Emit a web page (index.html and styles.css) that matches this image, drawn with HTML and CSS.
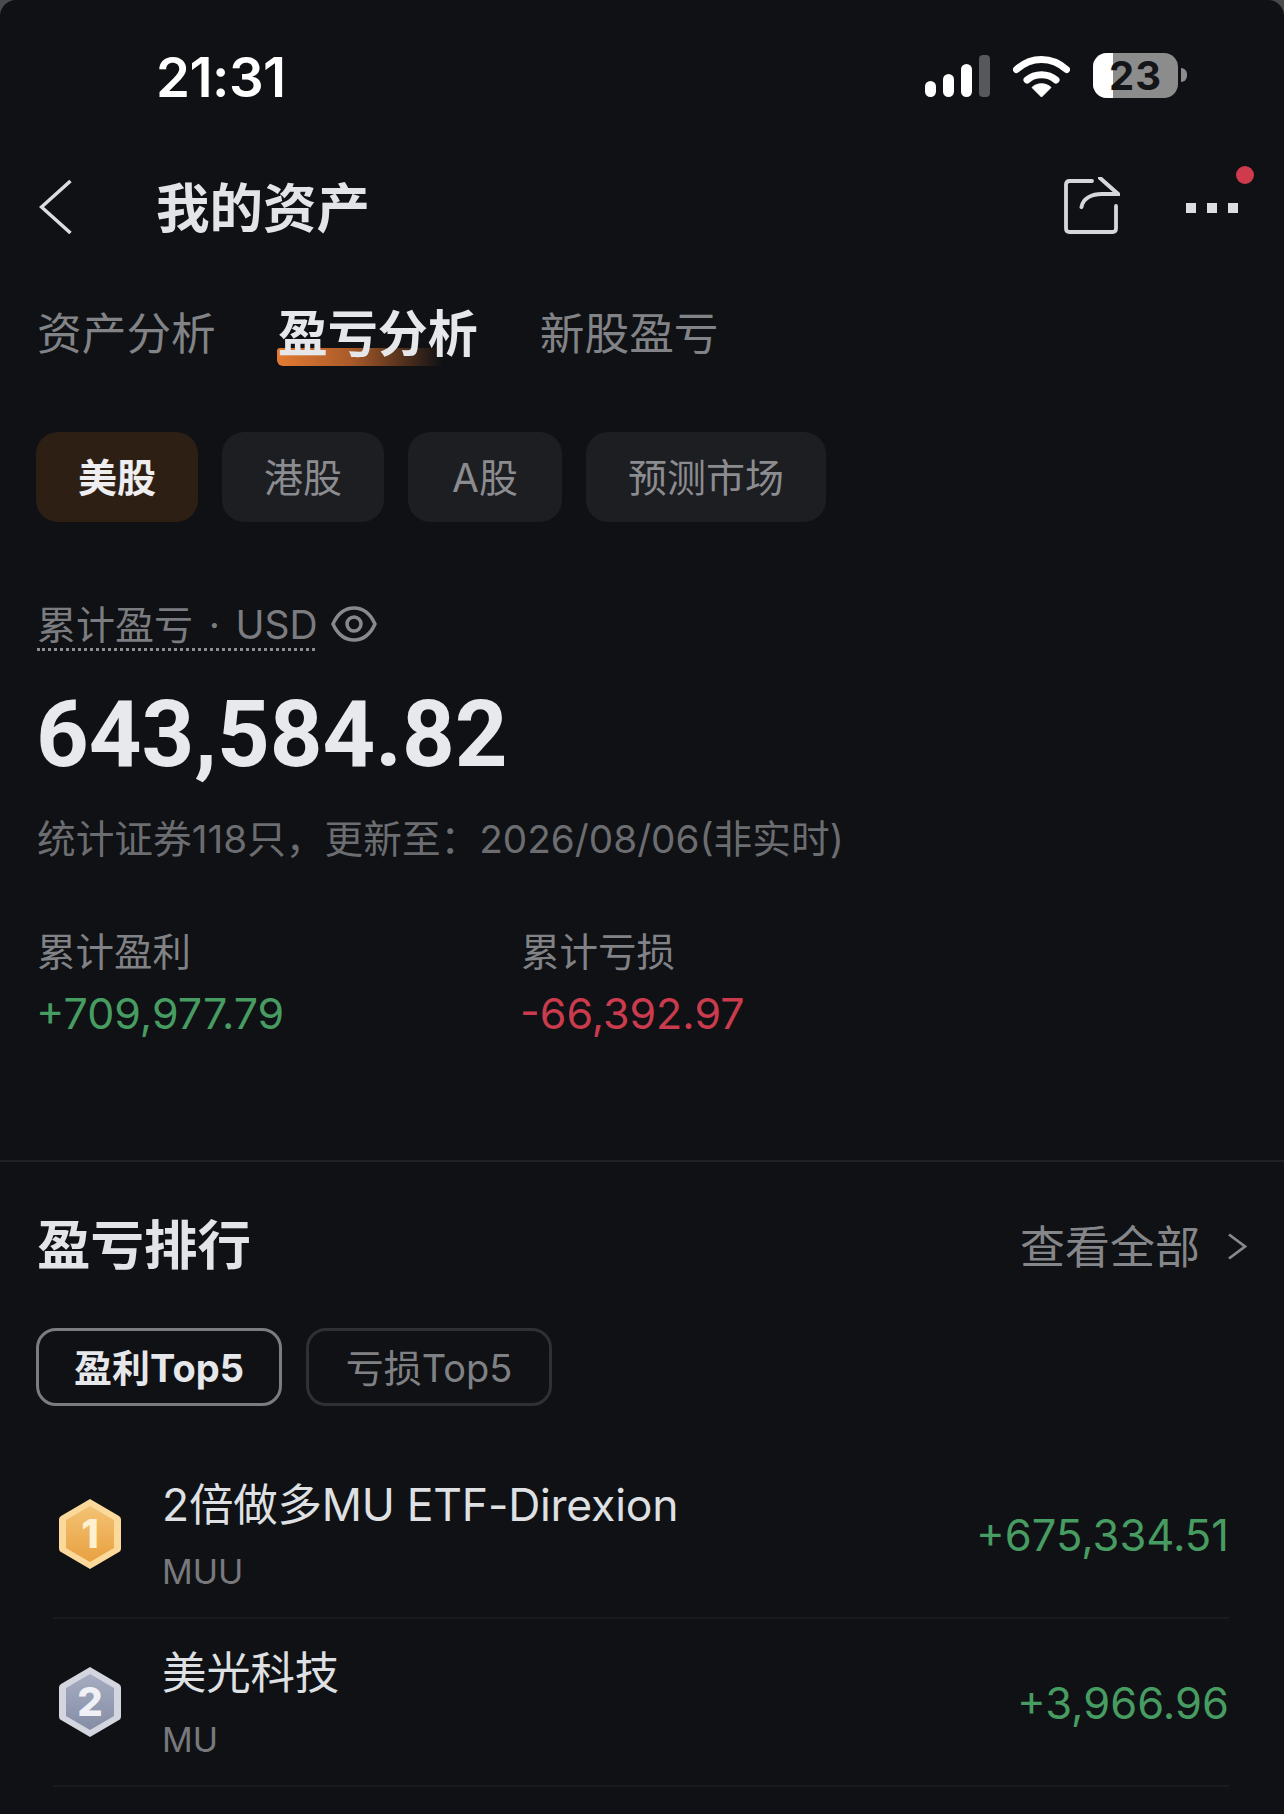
FILE: index.html
```html
<!DOCTYPE html>
<html lang="zh-CN">
<head>
<meta charset="utf-8">
<title>我的资产</title>
<link rel="stylesheet" href="styles.css">
</head>
<body>
<div class="app">
  <header class="status">
    <span class="clock">21:31</span>
    <div class="status-icons">
      <svg class="signal" width="65" height="42" viewBox="0 0 65 42"><rect x="0" y="26" width="11" height="16" rx="5.5" fill="#fff"/><rect x="18" y="19" width="11" height="23" rx="5.5" fill="#fff"/><rect x="36" y="9" width="11" height="33" rx="5.5" fill="#fff"/><rect x="54" y="0" width="11" height="42" rx="4" fill="#57585b"/></svg>
      <svg class="wifi" width="57" height="43" viewBox="0 0 57 43"><path d="M3.5 15.5C18 2 39 2 53.5 15.5" fill="none" stroke="#fff" stroke-width="7" stroke-linecap="round"/><path d="M14 26C22 19 35 19 43 26" fill="none" stroke="#fff" stroke-width="7" stroke-linecap="round"/><path d="M28.5 43L19 33.500C24 28.500 33 28.500 38 33.500Z" fill="#fff" stroke="#fff" stroke-width="1" stroke-linejoin="round"/></svg>
      <div class="battery"><span class="battery-fill"></span><span class="battery-num">23</span><span class="battery-tip"></span></div>
    </div>
  </header>

  <nav class="navbar">
    <svg class="back" width="33" height="54" viewBox="0 0 33 54"><path d="M31.500 1L2.500 27L31.500 53" fill="none" stroke="#dcdde0" stroke-width="3.500"/></svg>
    <h1 class="title">我的资产</h1>
    <svg class="share" width="56" height="58" viewBox="0 0 56 58"><path d="M28 4H5.500Q2 4 2 7.500V51.500Q2 55 5.500 55H48.500Q52 55 52 51.500V29" fill="none" stroke="#d6d7da" stroke-width="3.800" stroke-linecap="round"/><path d="M36 1L54 17H38C28 17 19 21 17.500 30" fill="none" stroke="#d6d7da" stroke-width="4" stroke-linecap="round"/></svg>
    <div class="more"><i></i><i></i><i></i><b class="red-dot"></b></div>
  </nav>

  <div class="tabs">
    <span class="tab">资产分析</span>
    <span class="tab tab-on">盈亏分析</span>
    <span class="tab">新股盈亏</span>
  </div>

  <div class="chips">
    <span class="chip chip-on">美股</span>
    <span class="chip">港股</span>
    <span class="chip chip-a">A股</span>
    <span class="chip">预测市场</span>
  </div>

  <section class="summary">
    <div class="sum-label">
      <span class="dotted">累计盈亏 · USD</span>
      <svg class="eye" width="46" height="36" viewBox="0 0 46 36"><path d="M2 18C7 7 14 2 23 2S39 7 44 18C39 29 32 34 23 34S7 29 2 18Z" fill="none" stroke="#88898d" stroke-width="3.500"/><circle cx="23" cy="18" r="7" fill="none" stroke="#88898d" stroke-width="3.500"/></svg>
    </div>
    <div class="big">643,584.82</div>
    <div class="meta">统计证券118只，更新至：2026/08/06(非实时)</div>
    <div class="stats">
      <div class="stat"><div class="stat-k">累计盈利</div><div class="stat-v green">+709,977.79</div></div>
      <div class="stat"><div class="stat-k">累计亏损</div><div class="stat-v red">-66,392.97</div></div>
    </div>
  </section>

  <section class="rank">
    <div class="rank-head">
      <h2 class="rank-title">盈亏排行</h2>
      <div class="view-all"><span class="view-text">查看全部</span><svg width="19" height="27" viewBox="0 0 19 27"><path d="M1 1.500L17 13.500L1 25.500" fill="none" stroke="#88898d" stroke-width="2.800"/></svg></div>
    </div>
    <div class="pills">
      <span class="pill pill-on">盈利Top5</span>
      <span class="pill">亏损Top5</span>
    </div>
    <div class="row">
      <svg class="medal" width="64" height="72" viewBox="0 0 64 72">
        <defs><linearGradient id="g1" x1="0" y1="0" x2="0" y2="1"><stop offset="0" stop-color="#f3c274"/><stop offset="1" stop-color="#e8a140"/></linearGradient></defs>
        <path d="M32 1L61 18Q63 19 63 21.500V50.500Q63 53 61 54L32 71L3 54Q1 53 1 50.500V21.500Q1 19 3 18Z" fill="#fbd99a"/>
        <path d="M32 8L56 22V50L32 64L8 50V22Z" fill="url(#g1)"/>
        <text class="medal-num" x="32" y="50" fill="#fff0cf">1</text>
      </svg>
      <div class="row-main"><div class="row-name">2倍做多MU ETF-Direxion</div><div class="row-code">MUU</div></div>
      <div class="row-val">+675,334.51</div>
    </div>
    <div class="row">
      <svg class="medal" width="64" height="72" viewBox="0 0 64 72">
        <defs><linearGradient id="g2" x1="0" y1="0" x2="0" y2="1"><stop offset="0" stop-color="#a6adc2"/><stop offset="1" stop-color="#858da6"/></linearGradient></defs>
        <path d="M32 1L61 18Q63 19 63 21.500V50.500Q63 53 61 54L32 71L3 54Q1 53 1 50.500V21.500Q1 19 3 18Z" fill="#d3d5df"/>
        <path d="M32 8L56 22V50L32 64L8 50V22Z" fill="url(#g2)"/>
        <text class="medal-num" x="32" y="50" fill="#f0f1f6">2</text>
      </svg>
      <div class="row-main"><div class="row-name">美光科技</div><div class="row-code">MU</div></div>
      <div class="row-val">+3,966.96</div>
    </div>
  </section>
</div>
</body>
</html>
```
FILE: styles.css
```css
* { box-sizing: border-box; }
html, body { margin: 0; height: 100%; background: #4a4a4c; }
body { overflow: hidden; }
.app {
  width: 1284px;
  height: 1814px;
  background: #0f1114;
  border-radius: 16px 16px 0 0;
  overflow: hidden;
  color: #e3e4e7;
  font-family: "Inter", "Noto Sans CJK SC", sans-serif;
}

/* status bar */
.status { height: 152px; display: flex; justify-content: space-between; padding: 45px 106px 0 156px; }
.clock { font-family: "Inter", sans-serif; font-size: 54.5px; font-weight: 600; line-height: 64px; color: #fff; letter-spacing: -0.5px; }
.status-icons { display: flex; align-items: flex-start; padding-top: 8px; }
.signal { margin-top: 2px; }
.wifi { margin: 1px 23px 0 23px; }
.battery { position: relative; width: 85px; height: 45px; border-radius: 14px; background: #8c8c8c; }
.battery-fill { position: absolute; left: 0; top: 0; bottom: 0; width: 20px; background: #fff; border-radius: 14px 0 0 14px; }
.battery-num { position: absolute; left: 0; width: 85px; top: 0; text-align: center; font-family: "Inter", sans-serif; font-size: 40px; font-weight: 700; line-height: 45px; color: #141518; letter-spacing: 1px; }
.battery-tip { position: absolute; right: -9px; top: 15px; width: 6px; height: 14px; background: #8c8c8c; border-radius: 0 7px 7px 0; }

/* nav */
.navbar { height: 112px; display: flex; align-items: center; padding-left: 39px; position: relative; }
.back { flex: none; margin-top: -3px; }
.title { margin: 0 0 0 84px; font-size: 53.5px; font-weight: 700; line-height: 64px; color: #e3e4e7; padding-top: 1px; }
.share { margin-left: auto; margin-right: 66px; margin-top: -5px; }
.more { display: flex; gap: 11px; margin-right: 46px; position: relative; }
.more i { display: block; width: 10px; height: 10px; background: #dcdde0; }
.red-dot { position: absolute; right: -16px; top: -37px; width: 18px; height: 18px; border-radius: 50%; background: #cf3a4c; }

/* tabs */
.tabs { display: flex; gap: 62px; padding: 0 0 0 37px; height: 100px; align-items: center; margin-top: 20px; }
.tab { font-size: 44.7px; line-height: 60px; color: #828387; position: relative; }
.tab-on { color: #e6e7ea; font-size: 50px; font-weight: 700; z-index: 0; }
.tab-on::after { content: ""; position: absolute; z-index: -1; left: -1px; top: 44px; width: 166px; height: 18px; border-radius: 3px 0 0 6px; background: linear-gradient(90deg, #e37a33 0%, #a95a28 45%, rgba(120,70,30,0) 100%); }

/* market chips */
.chips { display: flex; gap: 24px; padding-left: 36px; margin-top: 48px; }
.chip { height: 90px; padding: 0 42px 4px; display: flex; align-items: center; border-radius: 22px; background: #1d1e22; font-size: 39px; color: #8b8c90; }
.chip-a { padding: 0 44px 4px; }
.chip-on { background: #2e1f14; color: #eeeef0; font-weight: 700; }

/* summary */
.summary { padding: 78px 0 0 37px; height: 640px; border-bottom: 2px solid #202124; }
.sum-label { display: flex; align-items: center; height: 50px; font-size: 39px; color: #7b7c80; }
.dotted { display: block; line-height: 50px; height: 51px; border-bottom: 3px dotted #8c8e92; width: 278px; white-space: nowrap; word-spacing: 4.700px; }
.eye { margin-left: 16px; margin-top: -3px; }
.big { font-family: "Roboto", sans-serif; font-size: 92px; font-weight: 700; line-height: 108px; margin-top: 31px; margin-left: -1px; color: #e8e9ec; }
.meta { font-size: 38.7px; line-height: 50px; color: #6c6d71; margin-top: 25px; }
.stats { display: flex; margin-top: 63px; }
.stat { width: 484px; }
.stat-k { font-size: 38.5px; line-height: 50px; color: #818286; }
.stat-v { font-size: 43px; line-height: 56px; margin: 8px 0 0 -1px; }
.green { color: #479c62; }
.red { color: #c93b4d; }

/* ranking */
.rank { padding: 0 37px; }
.rank-head { display: flex; justify-content: space-between; align-items: center; height: 64px; margin-top: 52px; }
.rank-title { margin: 0; font-size: 53.5px; font-weight: 700; line-height: 64px; color: #e3e4e7; }
.view-all { display: flex; align-items: center; gap: 28px; font-size: 45px; color: #85868a; }
.view-text { padding-bottom: 4px; }
.pills { display: flex; gap: 24px; margin-top: 50px; margin-left: -1px; }
.pill { width: 246px; height: 78px; padding-bottom: 3px; border: 3px solid #2f3034; border-radius: 20px; display: flex; align-items: center; justify-content: center; font-size: 38px; color: #808185; }
.pill-on { border-color: #7b7c80; color: #e6e7ea; font-weight: 700; }
.row { display: flex; align-items: center; height: 168px; margin: 0 18px 0 16px; border-bottom: 2px solid #1a1b1e; padding-left: 5px; }
.pills + .row { margin-top: 45px; }
.medal { flex: none; }
.medal-num { font-family: "Inter", sans-serif; font-size: 40px; font-weight: 800; text-anchor: middle; }
.row-main { margin-left: 40px; padding-top: 2px; flex: 1; }
.row-name { font-size: 44.5px; line-height: 60px; color: #dfe0e3; letter-spacing: -0.230px; }
.row-code { font-size: 34px; line-height: 46px; margin-top: 14px; color: #78797d; }
.row-val { font-size: 43.5px; padding-top: 2px; color: #479c62; }
```
